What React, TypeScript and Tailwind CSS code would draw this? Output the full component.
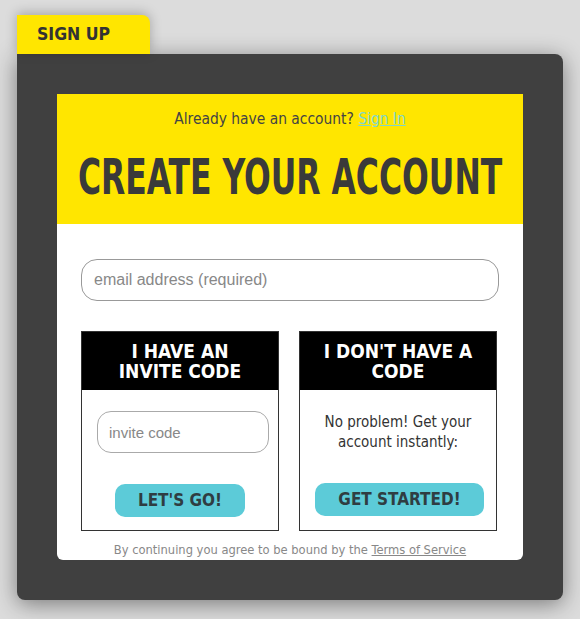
export default function App() {
    const cond = { fontFamily: '"DejaVu Sans Condensed", "Liberation Sans", sans-serif' };

    return (
        <div className="h-[619px] w-full overflow-hidden bg-[#dcdcdc] pt-[15px] pl-[17px]" style={{ fontFamily: '"Liberation Sans", Arial, sans-serif' }}>
            <div
                className="relative z-10 flex h-[39px] w-[133px] items-center rounded-tr-lg bg-[#ffe600] pl-[20px] text-[17.5px] font-bold text-[#333] shadow-[0_-2px_12px_rgba(0,0,0,0.25)]"
                style={cond}
            >
                SIGN UP
            </div>
            <div className="h-[546px] w-[546px] rounded-tr-lg rounded-b-lg bg-[#404040] p-[40px] shadow-[0_4px_22px_rgba(0,0,0,0.45)]">
                <div className="overflow-hidden rounded-b-md bg-white">
                    <div className="flex h-[130px] flex-col items-center bg-[#ffe600] pt-[14px]" style={cond}>
                        <p className="text-[15.4px] text-[#444]">
                            Already have an account?{' '}
                            <a href="#" className="text-[#7fd6cc] underline">
                                Sign In
                            </a>
                        </p>
                        <h1 className="mt-[21px] inline-block scale-x-[0.7] text-[50px] leading-none font-bold whitespace-nowrap text-[#3a3a3a]">
                            CREATE YOUR ACCOUNT
                        </h1>
                    </div>
                    <div className="px-[24px] pt-[35px]">
                        <input
                            placeholder="email address (required)"
                            className="h-[42px] w-[418px] rounded-[16px] border border-[#999] px-[12px] text-[16px] text-[#333] outline-none placeholder:text-[#888]"
                        />
                        <div className="mt-[30px] flex gap-[20px]">
                            <div className="flex h-[200px] w-[198px] flex-col border border-[#333]">
                                <div
                                    className="flex h-[58px] flex-col items-center justify-center bg-black text-[19px] leading-[20px] font-bold text-white"
                                    style={cond}
                                >
                                    <span>I HAVE AN</span>
                                    <span>INVITE CODE</span>
                                </div>
                                <div className="flex flex-1 flex-col pt-[21px]">
                                    <input
                                        placeholder="invite code"
                                        className="ml-[15px] h-[42px] w-[172px] rounded-[14px] border border-[#aaa] px-[11px] text-[15px] text-[#333] outline-none placeholder:text-[#888]"
                                    />
                                    <button
                                        className="mt-[31px] h-[33px] w-[130px] self-center rounded-[10px] bg-[#5ccbd8] text-[17px] font-bold text-[#2f3d42]"
                                        style={cond}
                                    >
                                        LET'S GO!
                                    </button>
                                </div>
                            </div>
                            <div className="flex h-[200px] w-[198px] flex-col border border-[#333]">
                                <div
                                    className="flex h-[58px] flex-col items-center justify-center bg-black text-[19px] leading-[20px] font-bold text-white"
                                    style={cond}
                                >
                                    <span>I DON'T HAVE A</span>
                                    <span>CODE</span>
                                </div>
                                <div className="flex flex-1 flex-col items-center pt-[22px]">
                                    <p className="text-center text-[15px] leading-[20px] text-[#333]" style={cond}>
                                        No problem! Get your
                                        <br />
                                        account instantly:
                                    </p>
                                    <button
                                        className="mt-[31px] ml-[3px] h-[33px] w-[169px] rounded-[10px] bg-[#5ccbd8] text-[17px] font-bold text-[#2f3d42]"
                                        style={cond}
                                    >
                                        GET STARTED!
                                    </button>
                                </div>
                            </div>
                        </div>
                        <p className="pt-[9px] text-center text-[12.8px] leading-[20px] text-[#888]" style={cond}>
                            By continuing you agree to be bound by the{' '}
                            <a href="#" className="underline">
                                Terms of Service
                            </a>
                        </p>
                    </div>
                </div>
            </div>
        </div>
    );
}
